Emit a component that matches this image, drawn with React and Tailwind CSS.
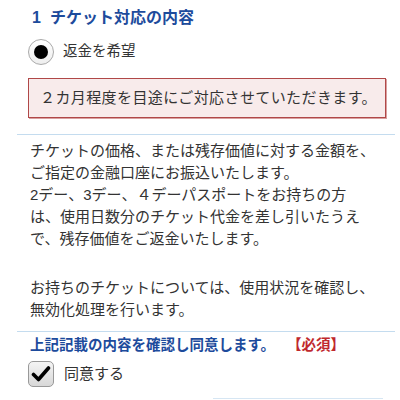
const jp = { fontFamily: '"Liberation Sans", "Noto Sans CJK JP", sans-serif' };

export default function App() {
  return (
    <div className="w-[400px] h-[400px] overflow-hidden bg-white text-[#333]" style={jp}>
      <div className="pl-[17px] pr-[5px]">
        {/* section title */}
        <div className="pl-[15px] pt-[8px]">
          <h2 className="flex text-[16px] leading-[20px] font-bold text-[#1d4b9c]">
            <span className="w-[18px]">1</span>
            <span>チケット対応の内容</span>
          </h2>
        </div>

        {/* radio */}
        <div className="pl-[11px] mt-[11px] flex items-center gap-[9px]">
          <span className="w-[26px] h-[26px] rounded-full border border-[#aaa] bg-gradient-to-b from-white to-[#eee] flex items-center justify-center">
            <span className="w-[14px] h-[14px] rounded-full bg-black" />
          </span>
          <span className="text-[14.5px]">返金を希望</span>
        </div>

        {/* notice */}
        <div className="ml-[11px] mr-[9px] mt-[13px] h-[40px] flex items-center pl-[11px] border border-[#b04848] bg-[#f8ebeb] shadow-[1px_1px_0_#d9a0a0]">
          <p className="text-[15px] tracking-[0.4px]">２カ月程度を目途にご対応させていただきます。</p>
        </div>

        <div className="mt-[16px] h-px bg-[#c4dcef]" />

        {/* description */}
        <div className="pl-[13px] pt-[5px] text-[15px] leading-[22px]">
          <p>
            チケットの価格、または残存価値に対する金額を、
            <br />
            ご指定の金融口座にお振込いたします。
            <br />
            2デー、3デー、４デーパスポートをお持ちの方
            <br />
            は、使用日数分のチケット代金を差し引いたうえ
            <br />
            で、残存価値をご返金いたします。
          </p>
          <p className="mt-[27px]">
            お持ちのチケットについては、使用状況を確認し、
            <br />
            無効化処理を行います。
          </p>
        </div>

        <div className="mt-[10px] h-px bg-[#c4dcef]" />

        {/* agreement */}
        <div className="pl-[13px] pt-[3px] flex text-[14.5px] leading-[20px] font-bold">
          <span className="text-[#1d4b9c]">上記記載の内容を確認し同意します。</span>
          <span className="ml-[12px] text-[#c0282d]">【必須】</span>
        </div>
        <div className="pl-[11px] mt-[6px] flex items-center gap-[10px]">
          <span className="w-[26px] h-[26px] rounded-[5px] border border-[#999] bg-gradient-to-b from-[#f4f4f4] to-[#d8d8d8] flex items-center justify-center">
            <svg width="20" height="18" viewBox="0 0 20 18">
              <path d="M2.5 9.5 L7.5 14.5 L17.5 3" fill="none" stroke="#000" strokeWidth="3.6" strokeLinecap="round" strokeLinejoin="round" />
            </svg>
          </span>
          <span className="text-[15px]">同意する</span>
        </div>
        <div className="ml-[196px] mr-[12px] mt-[11px] h-px bg-[#d6e6f3]" />
      </div>
    </div>
  );
}
